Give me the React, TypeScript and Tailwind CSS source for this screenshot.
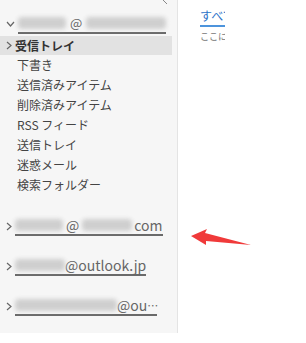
const Blur = ({ w }: { w: number }) => (
    <span className="inline-block h-[12px] bg-[#cfcfcf] blur-[2px] rounded-sm" style={{ width: w }} />
)

const ChevronRight = () => (
    <svg width="6" height="9" viewBox="0 0 6 9" className="shrink-0">
        <path d="M1 1 L5 4.5 L1 8" fill="none" stroke="#666" strokeWidth="1.2" />
    </svg>
)

const ChevronDown = () => (
    <svg width="9" height="6" viewBox="0 0 9 6" className="shrink-0">
        <path d="M1 1 L4.5 5 L8 1" fill="none" stroke="#666" strokeWidth="1.2" />
    </svg>
)

const Account = ({ children, open }: { children: React.ReactNode; open?: boolean }) => (
    <div className="flex items-center h-[20px] pl-[6px] gap-[3px]">
        {open ? <ChevronDown /> : <ChevronRight />}
        <span className="flex items-center h-[20px] border-b-2 border-[#6a6a6a] text-[14px] leading-[18px] text-[#666] whitespace-nowrap">
            {children}
        </span>
    </div>
)

const folders = ['下書き', '送信済みアイテム', '削除済みアイテム', 'RSS フィード', '送信トレイ', '迷惑メール', '検索フォルダー']

const App = () => {
    return (
        <div className="relative w-[306px] h-[343px] bg-white flex overflow-hidden" style={{ fontFamily: '"Noto Sans CJK JP", "Noto Sans", sans-serif' }}>
            <div className="w-[178px] h-[333px] bg-[#f6f6f6] border-r border-[#e4e4e4] flex flex-col shrink-0">
                <div className="h-[14px] relative">
                    <svg width="6" height="6" viewBox="0 0 6 6" className="absolute left-[162px] top-0">
                        <path d="M1 0 L5 4" stroke="#888" strokeWidth="1" />
                    </svg>
                </div>
                <div className="pr-[14px]">
                    <Account open>
                        <Blur w={48} />
                        <span className="mx-[4px] text-[13px]">@</span>
                        <Blur w={80} />
                    </Account>
                </div>
                <div className="mt-[2px] h-[19px] w-[172px] bg-[#e2e2e2] flex items-center pl-[6px] gap-[3px] text-[12px] font-bold text-[#333]">
                    <ChevronRight />
                    <span>受信トレイ</span>
                </div>
                {folders.map((f) => (
                    <div key={f} className="h-[20px] flex items-center pl-[17px] text-[12px] text-[#444]">
                        {f}
                    </div>
                ))}
                <div className="mt-[21px] flex flex-col gap-[20px]">
                    <Account>
                        <Blur w={48} />
                        <span className="mx-[3px]">@</span>
                        <Blur w={50} />
                        <span className="ml-[2px]">com</span>
                    </Account>
                    <Account>
                        <Blur w={50} />
                        <span>@outlook.jp</span>
                    </Account>
                    <Account>
                        <Blur w={102} />
                        <span>@ou</span>
                        <span className="text-[11px] tracking-[-1px]">⋯</span>
                    </Account>
                </div>
            </div>
            <div className="pl-[22px] pt-[7px]">
                <div className="w-[25px] overflow-hidden">
                    <div className="text-[12px] leading-[17px] text-[#2b72c8] whitespace-nowrap">すべて</div>
                    <div className="h-[2px] bg-[#4d94dc] mt-[1px]" />
                    <div className="text-[9px] leading-[12px] mt-[4px] text-[#777] whitespace-nowrap">ここに表示する</div>
                </div>
            </div>
            <svg width="70" height="30" viewBox="0 0 70 30" className="absolute left-[185px] top-[222px]">
                <polygon points="6,14 22,7 20,11 66,23 21,19 21,23" fill="#f03a3a" />
            </svg>
        </div>
    )
}

export default App
